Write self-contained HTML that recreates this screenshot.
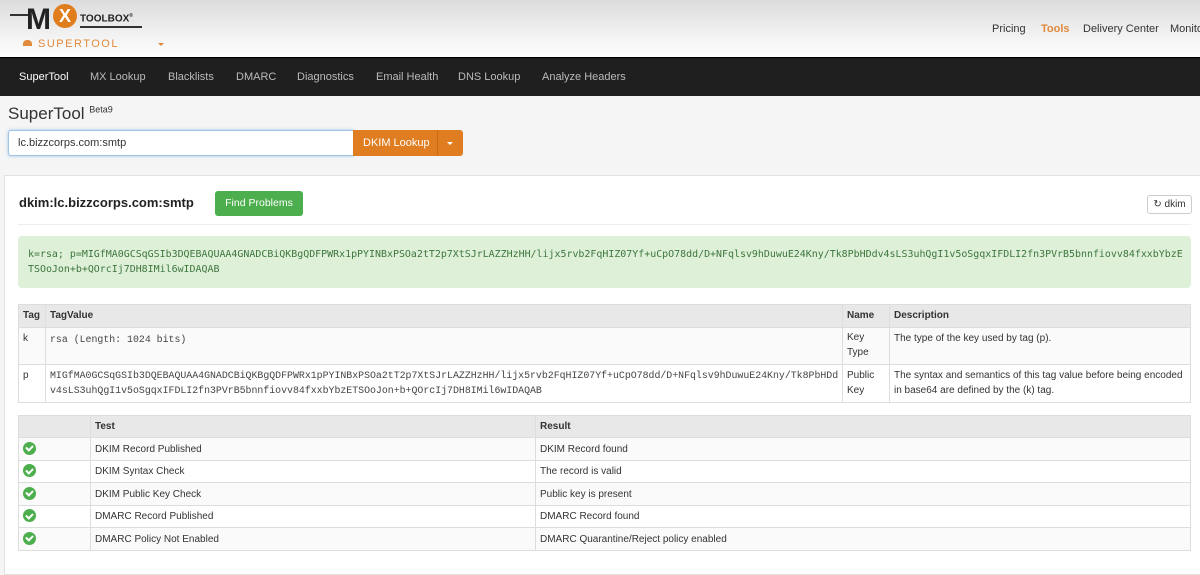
<!DOCTYPE html>
<html><head><meta charset="utf-8"><style>
*{box-sizing:border-box;margin:0;padding:0}
body{width:1200px;height:564px;overflow:hidden;font-family:"Liberation Sans",Arial,sans-serif;font-size:11px;color:#333;background:#f5f5f5;position:relative}
.abs{position:absolute}
#hdr{left:0;top:0;width:1200px;height:57px;background:linear-gradient(#dcdcdc,#fff)}
#nav{left:0;top:57px;width:1200px;height:39px;background:#1f1f1f;border-top:1px solid #000}
#nav span{position:absolute;top:13px;color:#bbb;font-size:11px}
.tr a{position:absolute;top:23px;font-size:11px;color:#333}
#panel{left:4px;top:175px;width:1200px;height:400px;background:#fff;border:1px solid #e2e2e2}
table{border-collapse:collapse;position:absolute;left:18px;width:1173px;font-size:10px;table-layout:fixed}
td,th{border:1px solid #ddd;text-align:left;vertical-align:top;padding:4px 4px;line-height:13px}
th{background:#e8e8e8;font-weight:bold}
.t2 td,.t2 th{vertical-align:middle;padding:0 4px}
.mono{font-family:"Liberation Mono","Courier New",monospace;font-size:9.9px;line-height:15px;color:#444;white-space:nowrap}
.ck{display:inline-block;width:13px;height:13px;border-radius:50%;background:#4cae4c;position:relative;top:1px}
.ck:after{content:"";position:absolute;left:4px;top:2.5px;width:3px;height:5px;border:solid #fff;border-width:0 2px 2px 0;transform:rotate(45deg)}
</style></head><body>
<div id="hdr" class="abs">
 <div class="abs" style="left:10px;top:14px;width:18px;height:2px;background:#333"></div>
 <div class="abs" style="left:26px;top:3px;font:900 30px 'Liberation Sans';color:#222;letter-spacing:-3px">M</div>
 <div class="abs" style="left:53px;top:4px;width:24px;height:24px;border-radius:50%;background:#e07d1e;color:#fff;font:bold 18px 'Liberation Sans';text-align:center;line-height:24px">X</div>
 <div class="abs" style="left:80px;top:13px;font:bold 10px 'Liberation Sans';color:#222">TOOLBOX<sup style="font-size:5px">®</sup></div>
 <div class="abs" style="left:80px;top:26px;width:62px;height:2px;background:#333"></div>
 <div class="abs" style="left:23px;top:40px;width:9px;height:6px;background:#e08a3c;border-radius:4px 4px 0 0"></div>
 <div class="abs" style="left:38px;top:38px;font-size:11px;letter-spacing:1.5px;color:#e08a3c">SUPERTOOL</div>
 <div class="abs" style="left:158px;top:43px;border:3px solid transparent;border-top:3px solid #e08a3c"></div>
 <div class="tr"><a style="left:992px">Pricing</a><a style="left:1041px;color:#e08a3c;font-weight:bold">Tools</a><a style="left:1083px">Delivery Center</a><a style="left:1170px">Monitoring</a></div>
</div>
<div id="nav" class="abs">
 <span style="left:19px;color:#fff">SuperTool</span><span style="left:90px">MX Lookup</span><span style="left:168px">Blacklists</span><span style="left:236px">DMARC</span><span style="left:297px">Diagnostics</span><span style="left:376px">Email Health</span><span style="left:458px">DNS Lookup</span><span style="left:542px">Analyze Headers</span>
</div>
<div class="abs" style="left:8px;top:104px;font-size:17px;color:#333">SuperTool <sup style="font-size:9px">Beta9</sup></div>
<div class="abs" style="left:8px;top:130px;width:346px;height:26px;background:#fff;border:1px solid #9ec4e6;border-radius:3px 0 0 3px;padding:6px 9px;font-size:11px;box-shadow:0 0 3px #9ec4e6">lc.bizzcorps.com:smtp</div>
<div class="abs" style="left:353px;top:130px;width:110px;height:26px;background:#e07d20;border-radius:0 3px 3px 0;color:#fff;font-size:11px;padding:7px 10px">DKIM Lookup<span style="position:absolute;left:84px;top:0;width:1px;height:26px;background:#c96a15"></span><span style="position:absolute;left:94px;top:12px;border:3px solid transparent;border-top-color:#fff"></span></div>
<div id="panel" class="abs"></div>
<div class="abs" style="left:19px;top:195px;font-weight:bold;font-size:13px;color:#222">dkim:lc.bizzcorps.com:smtp</div>
<div class="abs" style="left:215px;top:191px;width:88px;height:25px;background:#4cae4c;border-radius:3px;color:#fff;font-size:10.5px;text-align:center;line-height:25px">Find Problems</div>
<div class="abs" style="left:1147px;top:195px;width:45px;height:19px;border:1px solid #ccc;border-radius:3px;font-size:10px;text-align:center;line-height:17px;background:#fff">↻ dkim</div>
<div class="abs" style="left:18px;top:224px;width:1173px;height:1px;background:#eee"></div>
<div class="abs" style="left:18px;top:236px;width:1173px;height:52px;background:#dff0d8;border-radius:4px;padding:11px 10px;font-family:'DejaVu Sans Mono',monospace;font-size:9.95px;line-height:15px;color:#3c763d;white-space:nowrap">k=rsa; p=MIGfMA0GCSqGSIb3DQEBAQUAA4GNADCBiQKBgQDFPWRx1pPYINBxPSOa2tT2p7XtSJrLAZZHzHH/lijx5rvb2FqHIZ07Yf+uCpO78dd/D+NFqlsv9hDuwuE24Kny/Tk8PbHDdv4sLS3uhQgI1v5oSgqxIFDLI2fn3PVrB5bnnfiovv84fxxbYbzE<br>TSOoJon+b+QOrcIj7DH8IMil6wIDAQAB</div>
<table style="top:304px">
<tr style="height:23px"><th style="width:27px">Tag</th><th>TagValue</th><th style="width:47px">Name</th><th style="width:301px">Description</th></tr>
<tr style="height:36px;background:#fafafa"><td>k</td><td class="mono">rsa (Length: 1024 bits)</td><td style="line-height:15px;padding-top:2px">Key<br>Type</td><td>The type of the key used by tag (p).</td></tr>
<tr style="height:37px"><td>p</td><td class="mono" style="padding-top:3px">MIGfMA0GCSqGSIb3DQEBAQUAA4GNADCBiQKBgQDFPWRx1pPYINBxPSOa2tT2p7XtSJrLAZZHzHH/lijx5rvb2FqHIZ07Yf+uCpO78dd/D+NFqlsv9hDuwuE24Kny/Tk8PbHDd<br>v4sLS3uhQgI1v5oSgqxIFDLI2fn3PVrB5bnnfiovv84fxxbYbzETSOoJon+b+QOrcIj7DH8IMil6wIDAQAB</td><td style="line-height:15px;padding-top:3px">Public<br>Key</td><td style="line-height:15px;padding-top:3px">The syntax and semantics of this tag value before being encoded in base64 are defined by the (k) tag.</td></tr>
</table>
<table class="t2" style="top:415px">
<tr style="height:22px;"><th style="width:72px"></th><th style="width:445px">Test</th><th>Result</th></tr>
<tr style="height:23px;background:#fafafa"><td><span class="ck"></span></td><td>DKIM Record Published</td><td>DKIM Record found</td></tr>
<tr style="height:22px"><td><span class="ck"></span></td><td>DKIM Syntax Check</td><td>The record is valid</td></tr>
<tr style="height:23px;background:#fafafa"><td><span class="ck"></span></td><td>DKIM Public Key Check</td><td>Public key is present</td></tr>
<tr style="height:22px"><td><span class="ck"></span></td><td>DMARC Record Published</td><td>DMARC Record found</td></tr>
<tr style="height:23px;background:#fafafa"><td><span class="ck"></span></td><td>DMARC Policy Not Enabled</td><td>DMARC Quarantine/Reject policy enabled</td></tr>
</table>
</body></html>
